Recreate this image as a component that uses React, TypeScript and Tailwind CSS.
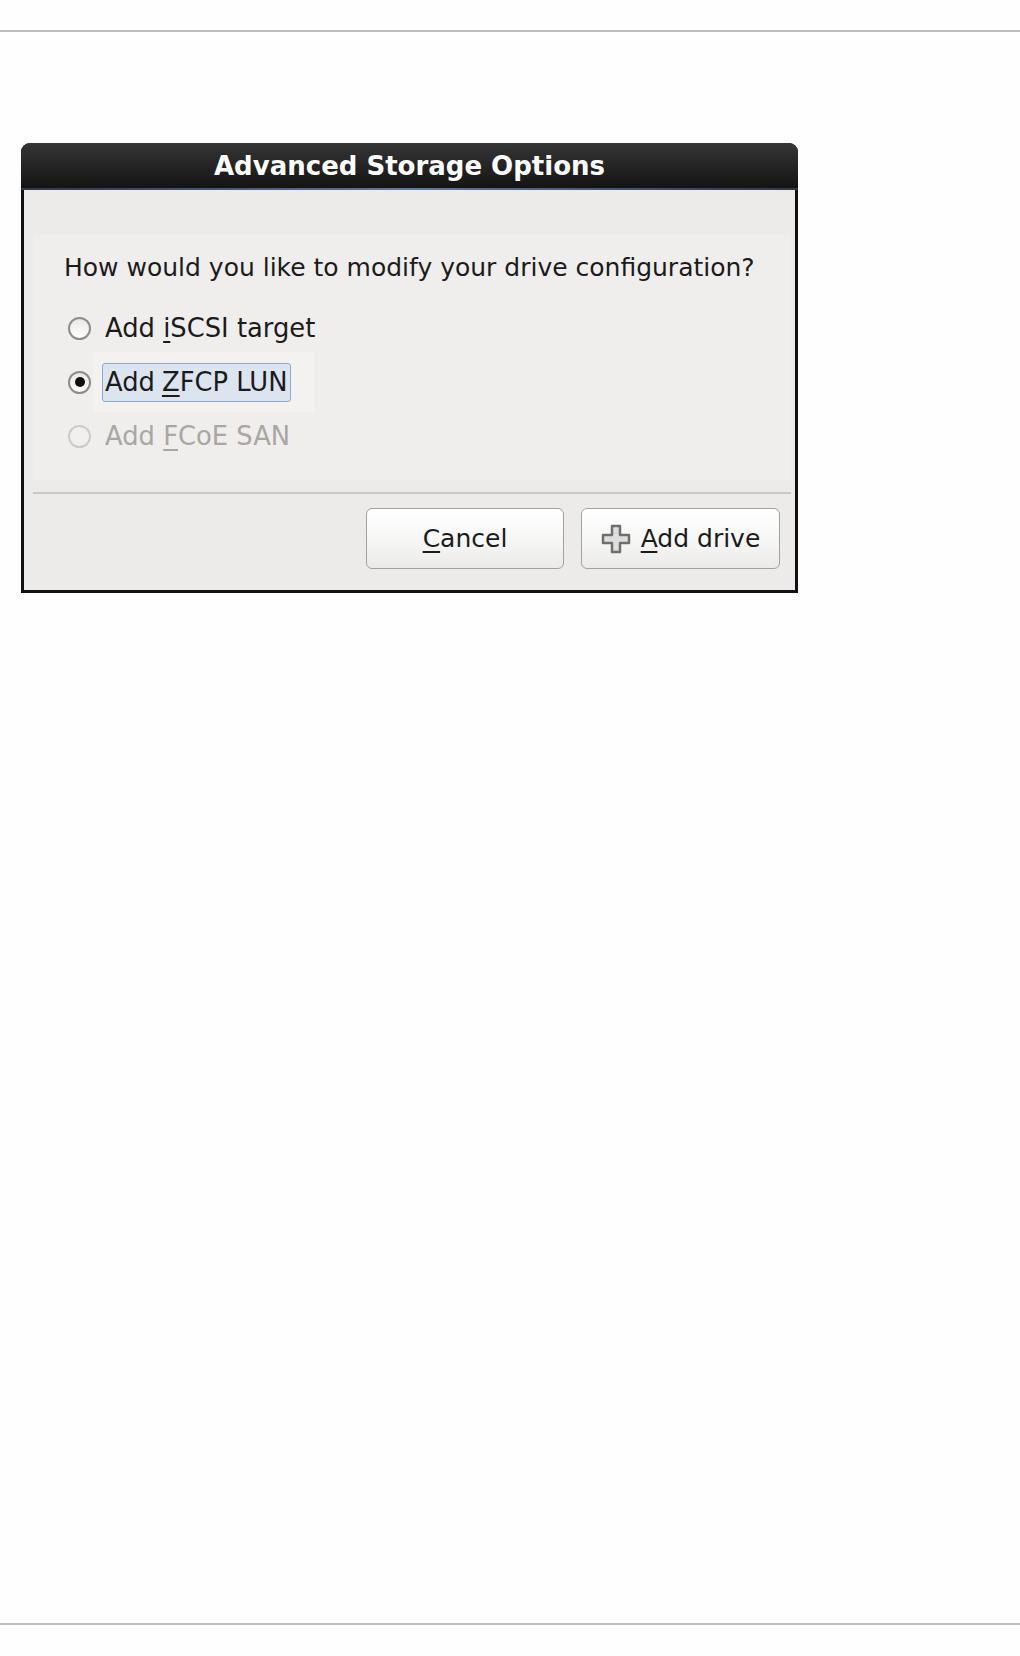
import React from 'react';

const font = { fontFamily: '"DejaVu Sans", Verdana, sans-serif' };

const Radio: React.FC<{ checked?: boolean; disabled?: boolean }> = ({ checked, disabled }) => (
  <span
    className={`flex h-[23px] w-[23px] shrink-0 items-center justify-center rounded-full border-2 ${
      disabled ? 'border-[#cdcac7] bg-[#f1f0ef]' : 'border-[#8e8c8a] bg-gradient-to-b from-[#e9e8e6] to-white'
    }`}
  >
    {checked && <span className="h-[10px] w-[10px] rounded-full bg-[#111]" />}
  </span>
);

const PlusIcon = () => (
  <svg width="30" height="30" viewBox="0 0 30 30">
    <path
      d="M11 2h8v9h9v8h-9v9h-8v-9H2v-8h9z"
      fill="#dedede"
      stroke="#6f6f6f"
      strokeWidth="2.5"
      strokeLinejoin="round"
    />
  </svg>
);

export default function App() {
  return (
    <div className="flex h-[1656px] w-[1020px] flex-col bg-[#fefefe]" style={font}>
      <div className="h-[30px]" />
      <div className="h-[2px] bg-[#bcbcbc]" />

      {/* Dialog */}
      <div className="ml-[21px] mt-[111px] flex h-[450px] w-[777px] flex-col overflow-hidden rounded-t-[9px] bg-[#111]">
        <div className="flex h-[45px] items-center justify-center bg-gradient-to-b from-[#363636] to-[#141414] pt-[2px] text-[26px] font-bold text-white">
          Advanced Storage Options
        </div>
        <div className="h-[2px] bg-gradient-to-r from-[#2b3a4e] via-[#5d7aa0] to-[#2b3a4e]" />
        <div className="mx-[3px] mb-[3px] flex flex-1 flex-col bg-[#edebe9] pl-[9px] pr-[4px]">
          <div className="mt-[45px] bg-[#efeeec] pb-[17px] pl-[31px] pt-[18px] text-[25px] text-[#1b1b1b]">
            <div className="leading-[30px]">How would you like to modify your drive configuration?</div>
            <div className="mt-[18px] flex h-[54px] items-center gap-[14px] pl-[4px] text-[25.8px]">
              <Radio />
              <span>
                Add <u className="underline-offset-[4px]">i</u>SCSI target
              </span>
            </div>
            <div className="flex h-[54px] items-center gap-[2px] pl-[4px] text-[25.8px]">
              <Radio checked />
              <span className="flex h-[60px] items-center bg-[#f3f2f1] pl-[9px] pr-[23px]">
                <span className="flex h-[39px] items-center rounded-[3px] border border-[#8eaad0] bg-[#dbe4ef] pl-[2px] pr-[2px]">
                  Add <u className="ml-[7px] underline-offset-[4px]">Z</u>FCP LUN
                </span>
              </span>
            </div>
            <div className="flex h-[54px] items-center gap-[14px] pl-[4px] text-[25.8px] text-[#aaa6a3]">
              <Radio disabled />
              <span>
                Add <u className="underline-offset-[4px]">F</u>CoE SAN
              </span>
            </div>
          </div>
          <div className="mt-[12px] h-[2px] bg-[#cac8c6]" />
          <div className="mt-[14px] flex justify-end gap-[17px] pr-[11px] text-[25px] text-[#1b1b1b]">
            <button className="flex h-[61px] w-[198px] items-center justify-center rounded-[6px] border border-[#a3a19e] bg-gradient-to-b from-white via-[#f7f7f6] to-[#ebeae8]">
              <span>
                <u className="underline-offset-[4px]">C</u>ancel
              </span>
            </button>
            <button className="flex h-[61px] w-[199px] items-center justify-center gap-[10px] rounded-[6px] border border-[#a3a19e] bg-gradient-to-b from-white via-[#f7f7f6] to-[#ebeae8]">
              <PlusIcon />
              <span>
                <u className="underline-offset-[4px]">A</u>dd drive
              </span>
            </button>
          </div>
        </div>
      </div>

      <div className="flex-1" />
      <div className="h-[2px] bg-[#bcbcbc]" />
      <div className="h-[31px]" />
    </div>
  );
}
